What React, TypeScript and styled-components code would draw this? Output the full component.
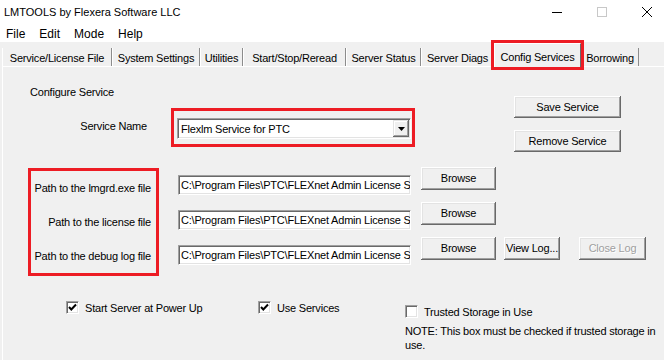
import styled, { createGlobalStyle } from 'styled-components'

const GlobalStyle = createGlobalStyle`
  html, body {
    margin: 0;
    padding: 0;
    background: #f0f0f0;
    overflow: hidden;
  }
  body {
    font-family: "Liberation Sans", Arial, sans-serif;
    font-size: 11px;
    letter-spacing: -0.2px;
    color: #000;
  }
`

const RED = '#ed1c24'

const sunken = `
  border-top: 1px solid #a0a0a0;
  border-left: 1px solid #a0a0a0;
  border-right: 1px solid #fff;
  border-bottom: 1px solid #fff;
  box-shadow: inset 1px 1px 0 #696969, inset -1px -1px 0 #e3e3e3;
`

const Window = styled.div`
  width: 664px;
  height: 360px;
  display: flex;
  flex-direction: column;
  overflow: hidden;
`

const TitleBar = styled.div`
  height: 23px;
  background: #fff;
  display: flex;
  align-items: center;
`

const Title = styled.span`
  padding-left: 4px;
  font-size: 11px;
  letter-spacing: 0;
`

const WindowControls = styled.div`
  margin-left: auto;
  margin-right: -5px;
  display: flex;
  height: 100%;
`

const ControlButton = styled.div`
  width: 45px;
  height: 100%;
  display: flex;
  align-items: center;
  justify-content: center;
`

const MenuBar = styled.div`
  height: 19px;
  background: #fff;
  display: flex;
  align-items: center;
  padding-top: 2px;
  box-sizing: border-box;
`

const MenuItem = styled.span`
  padding: 0 7px;
  font-size: 12px;
  letter-spacing: 0;
  &:first-child {
    padding-left: 6px;
  }
`

const TabStrip = styled.div`
  height: 24px;
  display: flex;
  align-items: flex-end;
  padding-left: 2px;
`

const Tab = styled.div<{ $w: number; $active?: boolean }>`
  width: ${p => p.$w}px;
  box-sizing: border-box;
  text-align: center;
  white-space: nowrap;
  height: ${p => (p.$active ? 24 : 18)}px;
  padding-top: ${p => (p.$active ? 6 : 2)}px;
  line-height: ${p => (p.$active ? 14 : 16)}px;
  margin-bottom: ${p => (p.$active ? -1 : 0)}px;
  border-left: 1px solid #fff;
  border-right: 1px solid ${p => (p.$active ? '#696969' : '#8c8c8c')};
  border-top: ${p => (p.$active ? '1px solid #fff' : 'none')};
  background: #f0f0f0;
  position: relative;
  z-index: ${p => (p.$active ? 2 : 1)};
  outline: ${p => (p.$active ? `3px solid ${RED}` : 'none')};
`

const Panel = styled.div`
  flex: 1;
  margin-left: 2px;
  border-top: 1px solid #fff;
  border-left: 1px solid #fff;
  display: flex;
  flex-direction: column;
`

const TopSection = styled.div`
  display: flex;
  justify-content: space-between;
  padding-right: 43px;
`

const LeftCol = styled.div`
  display: flex;
  flex-direction: column;
  padding-top: 19px;
`

const Heading = styled.div`
  margin-left: 27px;
  line-height: 13px;
`

const ServiceRow = styled.div`
  display: flex;
  align-items: center;
  margin-top: 9px;
`

const FieldLabel = styled.div`
  width: 144px;
  text-align: right;
  padding-bottom: 3px;
`

const Highlight = styled.div`
  margin-left: 24px;
  width: 244px;
  box-sizing: border-box;
  border: 3px solid ${RED};
  padding: 7px 1px 5px 3px;
`

const ComboBox = styled.div`
  height: 21px;
  box-sizing: border-box;
  background: #fff;
  ${sunken}
  display: flex;
  align-items: center;
  padding: 0 1px 0 3px;
`

const ComboText = styled.span`
  flex: 1;
  white-space: nowrap;
`

const DropButton = styled.div`
  width: 16px;
  height: 17px;
  box-sizing: border-box;
  background: #f0f0f0;
  box-shadow: inset -1px -1px 0 #696969, inset 1px 1px 0 #e3e3e3, inset -2px -2px 0 #a0a0a0, inset 2px 2px 0 #fff;
  display: flex;
  align-items: center;
  justify-content: center;
`

const ButtonCol = styled.div`
  display: flex;
  flex-direction: column;
  gap: 12px;
  padding-top: 29px;
`

const Button = styled.button<{ $w: number; $h?: number; $gap?: number }>`
  width: ${p => p.$w}px;
  height: ${p => p.$h ?? 23}px;
  margin: 0 0 0 ${p => p.$gap ?? 0}px;
  padding: 0 0 1px;
  border: 0;
  background: #f0f0f0;
  font-family: "Liberation Sans", Arial, sans-serif;
  font-size: 11px;
  letter-spacing: -0.2px;
  color: #000;
  white-space: nowrap;
  box-shadow: inset -1px -1px 0 #696969, inset 1px 1px 0 #fff, inset -2px -2px 0 #a0a0a0, inset 2px 2px 0 #e3e3e3;

  &:disabled {
    color: #a0a0a0;
    text-shadow: 1px 1px 0 #fff;
  }
`

const PathGrid = styled.div`
  display: grid;
  grid-template-columns: 131px 233px auto;
  grid-template-rows: 35px 35px 37px;
  margin-top: 15px;
  padding-left: 25px;
`

const LabelGroup = styled.div`
  grid-column: 1;
  grid-row: 1 / span 3;
  align-self: start;
  margin-top: 1px;
  border: 3px solid ${RED};
  display: flex;
  flex-direction: column;
  align-items: flex-end;
  padding-right: 5px;
`

const PathLabel = styled.div`
  line-height: 34px;
  white-space: nowrap;
`

const PathField = styled.div`
  margin: 8px 0 0 19px;
  height: 20px;
  width: 233px;
  box-sizing: border-box;
  background: #fff;
  ${sunken}
  padding: 0 2px;
  line-height: 18px;
  white-space: nowrap;
  overflow: hidden;
`

const ButtonCell = styled.div`
  display: flex;
  align-items: flex-start;
  padding-left: 29px;
`

const OptionsRow = styled.div`
  display: grid;
  grid-template-columns: 192px 147px auto;
  margin-top: 27px;
  padding-left: 63px;
`

const CheckItem = styled.div<{ $top?: number }>`
  display: flex;
  align-items: center;
  gap: 6px;
  height: 13px;
  margin-top: ${p => p.$top ?? 0}px;
  white-space: nowrap;
`

const CheckBox = styled.div`
  width: 13px;
  height: 13px;
  box-sizing: border-box;
  background: #fff;
  ${sunken}
  display: flex;
  align-items: center;
  justify-content: center;
`

const NoteCol = styled.div`
  display: flex;
  flex-direction: column;
`

const Note = styled.div`
  margin-top: 6px;
  line-height: 14px;
  white-space: nowrap;
`

const tabs = [
  { label: 'Service/License File', w: 110 },
  { label: 'System Settings', w: 88 },
  { label: 'Utilities', w: 43 },
  { label: 'Start/Stop/Reread', w: 103 },
  { label: 'Server Status', w: 75 },
  { label: 'Server Diags', w: 73 },
  { label: 'Config Services', w: 87, active: true },
  { label: 'Borrowing', w: 58 },
]

const paths = [
  'Path to the lmgrd.exe file',
  'Path to the license file',
  'Path to the debug log file',
]

const pathValue = 'C:\\Program Files\\PTC\\FLEXnet Admin License Server'

function Check({ checked }: { checked?: boolean }) {
  return (
    <CheckBox>
      {checked && (
        <svg width="9" height="9" viewBox="0 0 9 9">
          <path d="M1 4 L3.3 6.5 L8 1.5" fill="none" stroke="#000" strokeWidth="2" />
        </svg>
      )}
    </CheckBox>
  )
}

export default function App() {
  return (
    <>
      <GlobalStyle />
      <Window>
        <TitleBar>
          <Title>LMTOOLS by Flexera Software LLC</Title>
          <WindowControls>
            <ControlButton>
              <svg width="10" height="10" viewBox="0 0 10 10">
                <path d="M0 5.5 H10" stroke="#000" strokeWidth="1" />
              </svg>
            </ControlButton>
            <ControlButton>
              <svg width="10" height="10" viewBox="0 0 10 10">
                <rect x="0.5" y="0.5" width="9" height="9" fill="none" stroke="#c8c8c8" />
              </svg>
            </ControlButton>
            <ControlButton>
              <svg width="10" height="10" viewBox="0 0 10 10">
                <path d="M0 0 L10 10 M10 0 L0 10" stroke="#000" strokeWidth="1" />
              </svg>
            </ControlButton>
          </WindowControls>
        </TitleBar>

        <MenuBar>
          <MenuItem>File</MenuItem>
          <MenuItem>Edit</MenuItem>
          <MenuItem>Mode</MenuItem>
          <MenuItem>Help</MenuItem>
        </MenuBar>

        <TabStrip>
          {tabs.map(t => (
            <Tab key={t.label} $w={t.w} $active={t.active}>
              {t.label}
            </Tab>
          ))}
        </TabStrip>

        <Panel>
          <TopSection>
            <LeftCol>
              <Heading>Configure Service</Heading>
              <ServiceRow>
                <FieldLabel>Service Name</FieldLabel>
                <Highlight>
                  <ComboBox>
                    <ComboText>Flexlm Service for PTC</ComboText>
                    <DropButton>
                      <svg width="7" height="4" viewBox="0 0 7 4">
                        <path d="M0 0 H7 L3.5 4 Z" fill="#000" />
                      </svg>
                    </DropButton>
                  </ComboBox>
                </Highlight>
              </ServiceRow>
            </LeftCol>
            <ButtonCol>
              <Button $w={107} $h={22}>Save Service</Button>
              <Button $w={107} $h={22}>Remove Service</Button>
            </ButtonCol>
          </TopSection>

          <PathGrid>
            <LabelGroup>
              {paths.map(p => (
                <PathLabel key={p}>{p}</PathLabel>
              ))}
            </LabelGroup>
            {paths.map((p, i) => [
              <PathField key={p + 'f'}>{pathValue}</PathField>,
              <ButtonCell key={p + 'b'}>
                <Button $w={75}>Browse</Button>
                {i === 2 && (
                  <>
                    <Button $w={56} $gap={8}>View Log...</Button>
                    <Button $w={67} $gap={19} disabled>Close Log</Button>
                  </>
                )}
              </ButtonCell>,
            ])}
          </PathGrid>

          <OptionsRow>
            <CheckItem>
              <Check checked />
              Start Server at Power Up
            </CheckItem>
            <CheckItem>
              <Check checked />
              Use Services
            </CheckItem>
            <NoteCol>
              <CheckItem $top={4}>
                <Check />
                Trusted Storage in Use
              </CheckItem>
              <Note>
                NOTE: This box must be checked if trusted storage in
                <br />
                use.
              </Note>
            </NoteCol>
          </OptionsRow>
        </Panel>
      </Window>
    </>
  )
}
